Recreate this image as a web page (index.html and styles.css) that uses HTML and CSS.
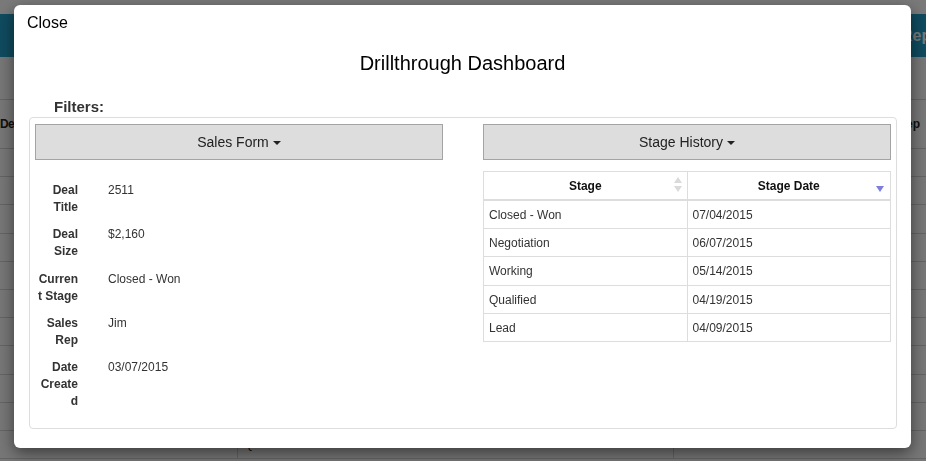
FILE: index.html
```html
<!DOCTYPE html>
<html lang="en">
<head>
<meta charset="utf-8">
<title>Drillthrough Dashboard</title>
<link rel="stylesheet" href="styles.css">
</head>
<body>
<div class="page">
  <div class="topline"></div>
  <div class="navbar"><span class="navbar-text">Rep</span></div>
  <table class="bg-table">
    <thead>
      <tr><th class="c1">Deal Title</th><th class="c2"></th><th class="c3">Rep</th></tr>
    </thead>
    <tbody>
      <tr><td></td><td></td><td></td></tr>
      <tr><td></td><td></td><td></td></tr>
      <tr><td></td><td></td><td></td></tr>
      <tr><td></td><td></td><td></td></tr>
      <tr><td></td><td></td><td></td></tr>
      <tr><td></td><td></td><td></td></tr>
      <tr><td></td><td></td><td></td></tr>
      <tr><td></td><td></td><td></td></tr>
      <tr><td></td><td></td><td></td></tr>
      <tr><td></td><td></td><td></td></tr>
      <tr><td></td><td>Qualified</td><td>Lead</td></tr>
    </tbody>
  </table>
</div>
<div class="backdrop"></div>

<div class="modal">
  <div class="modal-close">Close</div>
  <h3 class="modal-title">Drillthrough Dashboard</h3>
  <h4 class="filters">Filters:</h4>
  <div class="panel">
    <div class="cols">
      <div class="col">
        <div class="dd-button">Sales Form<span class="caret"></span></div>
        <div class="form">
          <div class="form-row"><div class="form-label">Deal Title</div><div class="form-value">2511</div></div>
          <div class="form-row"><div class="form-label">Deal Size</div><div class="form-value">$2,160</div></div>
          <div class="form-row"><div class="form-label">Current Stage</div><div class="form-value">Closed - Won</div></div>
          <div class="form-row"><div class="form-label">Sales Rep</div><div class="form-value">Jim</div></div>
          <div class="form-row"><div class="form-label">Date Created</div><div class="form-value">03/07/2015</div></div>
        </div>
      </div>
      <div class="col">
        <div class="dd-button">Stage History<span class="caret"></span></div>
        <table class="stage-table">
          <thead>
            <tr>
              <th>Stage
                <svg class="sort sort-both" width="8" height="15" viewBox="0 0 8 15"><polygon points="0,6 4,0 8,6" fill="#dadada"/><polygon points="0,9 8,9 4,15" fill="#dadada"/></svg>
              </th>
              <th>Stage Date
                <svg class="sort sort-desc" width="8" height="6" viewBox="0 0 8 6"><polygon points="0,0 8,0 4,6" fill="#7c7fdc"/></svg>
              </th>
            </tr>
          </thead>
          <tbody>
            <tr><td>Closed - Won</td><td>07/04/2015</td></tr>
            <tr><td>Negotiation</td><td>06/07/2015</td></tr>
            <tr><td>Working</td><td>05/14/2015</td></tr>
            <tr><td>Qualified</td><td>04/19/2015</td></tr>
            <tr><td>Lead</td><td>04/09/2015</td></tr>
          </tbody>
        </table>
      </div>
    </div>
  </div>
</div>
</body>
</html>
```
FILE: styles.css
```css
html, body {
  margin: 0;
  padding: 0;
  width: 926px;
  height: 461px;
  overflow: hidden;
}

body {
  background: #eeeeee;
  font-family: "Liberation Sans", Arial, Helvetica, sans-serif;
  color: #333;
}

/* ---------- background page ---------- */
.page {
  width: 926px;
}

.topline {
  height: 14px;
  background: #f4f4f4;
}

.navbar {
  height: 43px;
  background: #2196bf;
  display: flex;
  align-items: center;
}

.navbar-text {
  margin-left: 901px;
  color: #e8f2f6;
  font-weight: bold;
  font-size: 16px;
  white-space: nowrap;
}

.bg-table {
  margin-top: 42px;
  width: 926px;
  border-collapse: collapse;
  font-size: 12px;
  line-height: 17px;
  color: #222;
}

.bg-table th,
.bg-table td {
  border-top: 1px solid #c8c8c8;
  border-bottom: 1px solid #c8c8c8;
  padding: 5px 6px;
  text-align: left;
}

.bg-table td {
  height: 17.2px;
}

.bg-table td + td,
.bg-table th + th {
  border-left: 1px solid #c8c8c8;
}

.bg-table th {
  height: 38px;
  font-weight: bold;
}

.bg-table .c1 { width: 231px; padding-left: 0; letter-spacing: -0.6px; }
.bg-table .c2 { width: 423px; }
.bg-table .c3 { text-align: right; }

.backdrop {
  position: fixed;
  inset: 0;
  background: rgba(0, 0, 0, 0.5);
}

/* ---------- modal ---------- */
.modal {
  position: absolute;
  left: 14px;
  top: 5px;
  width: 897px;
  height: 443px;
  box-sizing: border-box;
  padding-top: 9px;
  background: #fff;
  border-radius: 6px;
  box-shadow: 0 5px 15px rgba(0, 0, 0, 0.5);
}

.modal-close {
  padding-left: 13px;
  font-size: 16px;
  line-height: 18px;
  color: #000;
}

.modal-title {
  margin: 20px 0 0;
  font-size: 20px;
  line-height: 22px;
  font-weight: normal;
  text-align: center;
  color: #000;
}

.filters {
  margin: 24px 0 0 40px;
  font-size: 15px;
  line-height: 17px;
  font-weight: bold;
  color: #333;
}

.panel {
  margin: 2px 14px 0 15px;
  height: 312px;
  box-sizing: border-box;
  border: 1px solid #dddddd;
  border-radius: 4px;
  padding: 6px 5px;
}

.cols {
  display: grid;
  grid-template-columns: 408px 408px;
  column-gap: 40px;
}

.dd-button {
  height: 36px;
  box-sizing: border-box;
  border: 1px solid #a4a4a4;
  background: #dddddd;
  display: flex;
  align-items: center;
  justify-content: center;
  font-size: 14px;
  color: #222;
}

.caret {
  display: inline-block;
  width: 0;
  height: 0;
  margin-left: 4px;
  margin-top: 2px;
  border-top: 4px solid #222;
  border-left: 4px solid transparent;
  border-right: 4px solid transparent;
}

/* left form */
.form {
  margin-top: 22px;
  font-size: 12px;
  line-height: 1.42857;
}

.form-row {
  display: grid;
  grid-template-columns: 42px 1fr;
  column-gap: 30px;
  margin-left: 1px;
  margin-bottom: 10px;
}

.form-label {
  font-weight: bold;
  text-align: right;
  overflow-wrap: break-word;
  word-wrap: break-word;
  color: #333;
}

.form-value {
  color: #333;
}

/* right table */
.stage-table {
  margin-top: 11px;
  width: 100%;
  border-collapse: collapse;
  table-layout: fixed;
  font-size: 12px;
  line-height: 1.42857;
}

.stage-table th,
.stage-table td {
  border: 1px solid #dddddd;
  padding: 6px 5px 4px;
  text-align: left;
  color: #333;
}

.stage-table th {
  position: relative;
  text-align: center;
  font-weight: bold;
  color: #111;
  border-bottom-width: 2px;
}

.sort {
  position: absolute;
  display: block;
}

.sort-both {
  right: 5px;
  top: 5px;
}

.sort-desc {
  right: 6px;
  top: 14px;
}
```
